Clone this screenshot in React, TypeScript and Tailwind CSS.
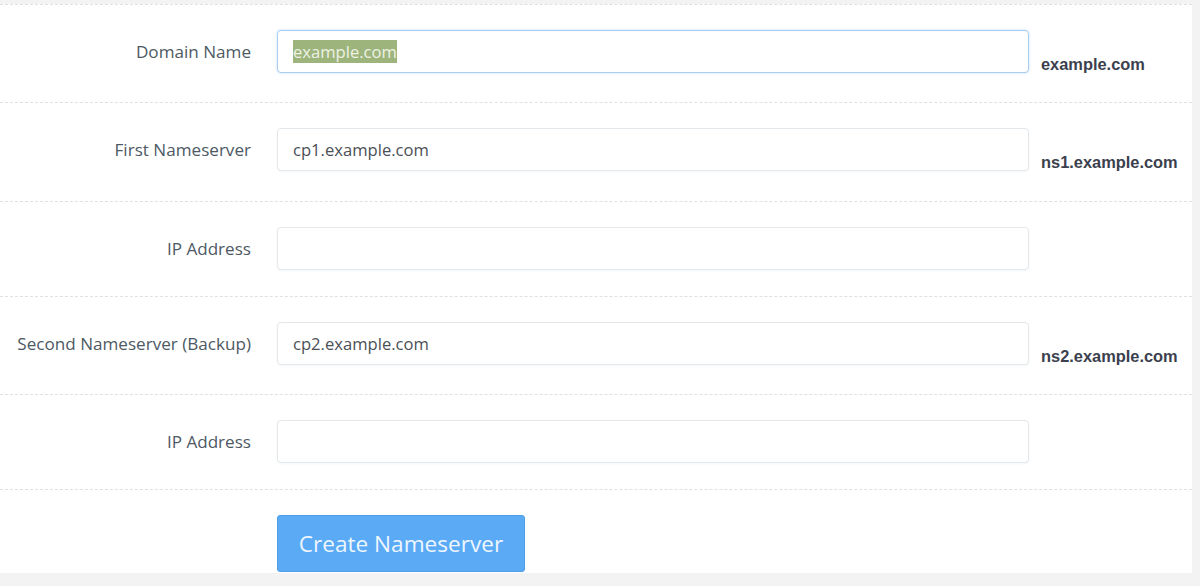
import React from "react";

const sans = { fontFamily: '"Open Sans", "Noto Sans", sans-serif' };
const helpFont = { fontFamily: '"Liberation Sans", Arial, sans-serif' };

type Row = {
  label: string;
  value?: string;
  selected?: boolean;
  help?: string;
  tall?: boolean;
};

const rows: Row[] = [
  { label: "Domain Name", value: "example.com", selected: true, help: "example.com" },
  { label: "First Nameserver", value: "cp1.example.com", help: "ns1.example.com", tall: true },
  { label: "IP Address" },
  { label: "Second Nameserver (Backup)", value: "cp2.example.com", help: "ns2.example.com" },
  { label: "IP Address" },
];

function Field({ row }: { row: Row }) {
  if (row.selected) {
    return (
      <div className="flex h-[43px] w-[752px] shrink-0 items-center rounded-[4px] border border-[#a9cdf2] bg-white pl-[15px] shadow-[0_0_3px_rgba(102,175,233,0.35)]">
        <span className="bg-[#9db57c] text-[16.6px] leading-[23px] text-[#eef2e4]">{row.value}</span>
      </div>
    );
  }
  return (
    <div className="flex h-[43px] w-[752px] shrink-0 items-center rounded-[4px] border border-[#e3e8ec] bg-white pl-[15px] shadow-[0_1px_2px_rgba(120,140,160,0.08)]">
      <span className="text-[16.6px] leading-[23px] text-[#4b5056]">{row.value ?? ""}</span>
    </div>
  );
}

export default function App() {
  return (
    <div className="min-h-[586px] w-full bg-[#f3f3f3] pt-[4px]" style={sans}>
      <div className="mr-[8px] bg-white pb-[1px]">
        {rows.map((row, i) => (
          <div
            key={i}
            className={`flex items-start border-t border-dashed border-[#dde1e6] pt-[25px] ${
              row.tall ? "pb-[27px]" : "pb-[26px]"
            }`}
          >
            <div className="flex h-[43px] w-[251px] shrink-0 items-center justify-end text-[17.1px] text-[#4d5963]">
              {row.label}
            </div>
            <div className="ml-[26px]">
              <Field row={row} />
            </div>
            {row.help && (
              <div
                className="ml-[12px] mt-[23px] text-[16.4px] font-bold leading-[23px] text-[#3b3f4e]"
                style={helpFont}
              >
                {row.help}
              </div>
            )}
          </div>
        ))}
        <div className="flex border-t border-dashed border-[#dde1e6] pt-[25px]">
          <div className="w-[251px] shrink-0" />
          <button
            type="button"
            className="ml-[26px] h-[57px] w-[248px] rounded-[3px] border border-[#4d9ee9] bg-[#5aaaf6] text-[22.6px] text-[#eef6fe]"
            style={sans}
          >
            Create Nameserver
          </button>
        </div>
      </div>
    </div>
  );
}
